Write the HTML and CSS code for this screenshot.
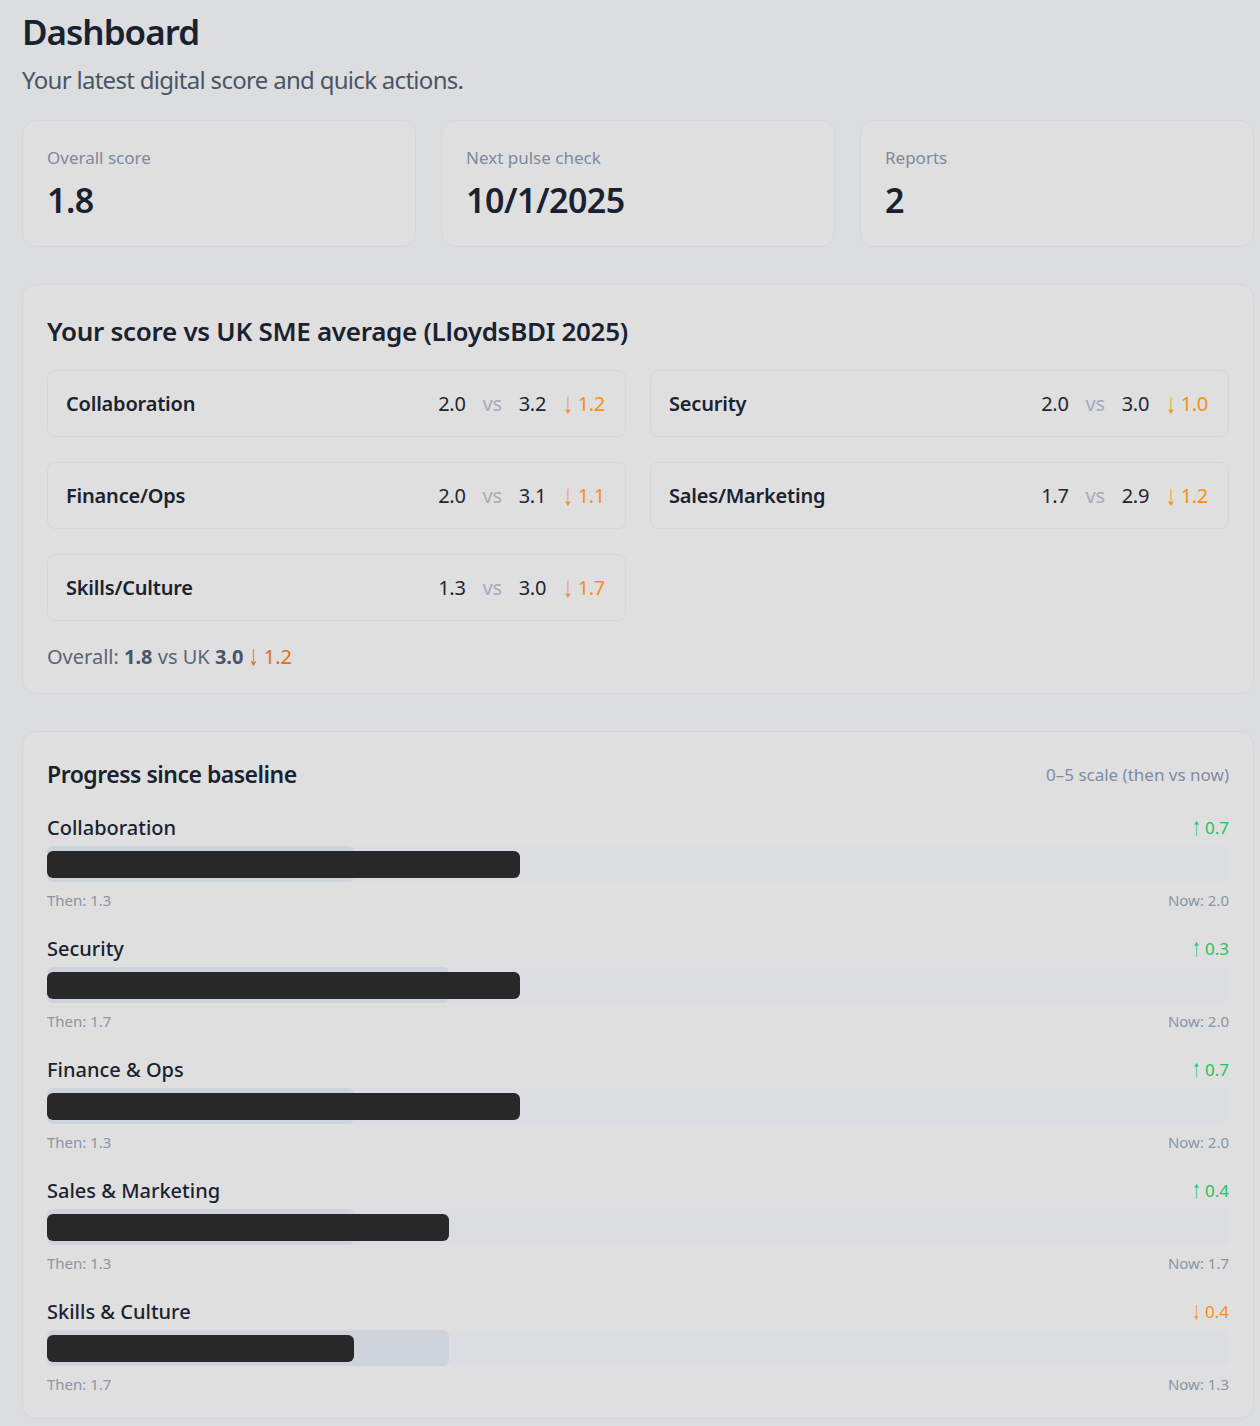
FILE: index.html
```html
<!DOCTYPE html>
<html lang="en">
<head>
<meta charset="utf-8">
<title>Dashboard</title>
<link rel="stylesheet" href="styles.css">
</head>
<body>
<main class="page">
  <header class="page-head">
    <h1 class="page-title">Dashboard</h1>
    <p class="page-sub">Your latest digital score and quick actions.</p>
  </header>

  <section class="stats">
    <div class="card stat">
      <div class="stat-label">Overall score</div>
      <div class="stat-value">1.8</div>
    </div>
    <div class="card stat">
      <div class="stat-label">Next pulse check</div>
      <div class="stat-value">10/1/2025</div>
    </div>
    <div class="card stat">
      <div class="stat-label">Reports</div>
      <div class="stat-value">2</div>
    </div>
  </section>

  <section class="card compare">
    <h2 class="compare-title">Your score vs UK SME average (LloydsBDI 2025)</h2>
    <div class="compare-grid">
      <div class="cmp-row">
        <span class="cmp-name">Collaboration</span>
        <span class="cmp-vals"><span>2.0</span><span class="vs">vs</span><span>3.2</span><span class="down"><span class="arr">↓</span> 1.2</span></span>
      </div>
      <div class="cmp-row">
        <span class="cmp-name">Security</span>
        <span class="cmp-vals"><span>2.0</span><span class="vs">vs</span><span>3.0</span><span class="down"><span class="arr">↓</span> 1.0</span></span>
      </div>
      <div class="cmp-row">
        <span class="cmp-name">Finance/Ops</span>
        <span class="cmp-vals"><span>2.0</span><span class="vs">vs</span><span>3.1</span><span class="down"><span class="arr">↓</span> 1.1</span></span>
      </div>
      <div class="cmp-row">
        <span class="cmp-name">Sales/Marketing</span>
        <span class="cmp-vals"><span>1.7</span><span class="vs">vs</span><span>2.9</span><span class="down"><span class="arr">↓</span> 1.2</span></span>
      </div>
      <div class="cmp-row">
        <span class="cmp-name">Skills/Culture</span>
        <span class="cmp-vals"><span>1.3</span><span class="vs">vs</span><span>3.0</span><span class="down"><span class="arr">↓</span> 1.7</span></span>
      </div>
    </div>
    <p class="overall">Overall: <b>1.8</b> vs UK <b>3.0</b> <span class="overall-delta"><span class="arr">↓</span> 1.2</span></p>
  </section>

  <section class="card progress">
    <div class="prog-head">
      <h2 class="prog-title">Progress since baseline</h2>
      <span class="prog-scale">0–5 scale (then vs now)</span>
    </div>

    <div class="prog-item">
      <div class="prog-top"><span class="prog-name">Collaboration</span><span class="up"><span class="arr">↑</span> 0.7</span></div>
      <div class="track"><div class="then-bar" style="width:26%"></div><div class="now-bar" style="width:40%"></div></div>
      <div class="prog-caps"><span>Then: 1.3</span><span>Now: 2.0</span></div>
    </div>

    <div class="prog-item">
      <div class="prog-top"><span class="prog-name">Security</span><span class="up"><span class="arr">↑</span> 0.3</span></div>
      <div class="track"><div class="then-bar" style="width:34%"></div><div class="now-bar" style="width:40%"></div></div>
      <div class="prog-caps"><span>Then: 1.7</span><span>Now: 2.0</span></div>
    </div>

    <div class="prog-item">
      <div class="prog-top"><span class="prog-name">Finance &amp; Ops</span><span class="up"><span class="arr">↑</span> 0.7</span></div>
      <div class="track"><div class="then-bar" style="width:26%"></div><div class="now-bar" style="width:40%"></div></div>
      <div class="prog-caps"><span>Then: 1.3</span><span>Now: 2.0</span></div>
    </div>

    <div class="prog-item">
      <div class="prog-top"><span class="prog-name">Sales &amp; Marketing</span><span class="up"><span class="arr">↑</span> 0.4</span></div>
      <div class="track"><div class="then-bar" style="width:26%"></div><div class="now-bar" style="width:34%"></div></div>
      <div class="prog-caps"><span>Then: 1.3</span><span>Now: 1.7</span></div>
    </div>

    <div class="prog-item">
      <div class="prog-top"><span class="prog-name">Skills &amp; Culture</span><span class="down"><span class="arr">↓</span> 0.4</span></div>
      <div class="track"><div class="then-bar" style="width:34%"></div><div class="now-bar" style="width:26%"></div></div>
      <div class="prog-caps"><span>Then: 1.7</span><span>Now: 1.3</span></div>
    </div>
  </section>
</main>
</body>
</html>
```

FILE: styles.css
```css
* { box-sizing: border-box; }
html, body { margin: 0; padding: 0; }
body {
  background: #dcdddf;
  font-family: "Noto Sans", "Open Sans", sans-serif;
  color: #1e2633;
}
.page {
  width: 1232px;
  margin-left: 22px;
  padding-top: 8px;
  padding-bottom: 8px;
}
.page-title {
  margin: 0;
  font-size: 35px;
  line-height: 48px;
  font-weight: 600;
  letter-spacing: -1px;
  color: #1a2230;
}
.page-sub {
  margin: 4px 0 0;
  font-size: 24px;
  line-height: 40px;
  letter-spacing: -0.7px;
  color: #4a5566;
}
.card {
  background: #dfdfdf;
  border: 1px solid #d6d7d9;
  border-radius: 14px;
}
.stats {
  display: grid;
  grid-template-columns: repeat(3, 1fr);
  gap: 25px;
  margin-top: 20px;
}
.stat {
  height: 127px;
  padding: 24px;
}
.stat-label {
  font-size: 17px;
  line-height: 26px;
  color: #7d8a9c;
}
.stat-value {
  margin-top: 6px;
  font-size: 34px;
  line-height: 46px;
  font-weight: 600;
  letter-spacing: -0.5px;
  color: #1a2230;
}
.compare {
  margin-top: 37px;
  padding: 24px 24px 22px;
}
.compare-title {
  margin: 0;
  font-size: 26px;
  line-height: 44px;
  font-weight: 600;
  letter-spacing: -0.3px;
  color: #1a2230;
}
.compare-grid {
  margin-top: 17px;
  display: grid;
  grid-template-columns: 1fr 1fr;
  column-gap: 24px;
  row-gap: 25px;
}
.cmp-row {
  height: 67px;
  display: flex;
  align-items: center;
  justify-content: space-between;
  padding: 0 20px 0 18px;
  border: 1px solid #d6d7d9;
  border-radius: 8px;
}
.cmp-name {
  font-size: 20px;
  font-weight: 600;
  letter-spacing: -0.2px;
  color: #1a2230;
}
.cmp-vals {
  display: flex;
  gap: 17px;
  font-size: 20px;
  letter-spacing: -0.3px;
  color: #1e2633;
}
.vs { color: #a3adbd; }
.down { color: #f6901c; }
.up { color: #22c35e; }
.arr {
  display: inline-block;
  transform: scaleY(1.45);
  transform-origin: 50% 65%;
}
.overall {
  margin: 22px 0 0;
  font-size: 20px;
  line-height: 28px;
  color: #5a6575;
}
.overall b { font-weight: 700; color: #4a5566; }
.overall-delta { color: #df6d1a; }
.progress {
  margin-top: 37px;
  padding: 24px;
}
.prog-head {
  display: flex;
  justify-content: space-between;
  align-items: center;
  margin-bottom: 21px;
}
.prog-title {
  margin: 0;
  font-size: 23px;
  line-height: 36px;
  font-weight: 600;
  letter-spacing: -0.5px;
  color: #1a2230;
}
.prog-scale {
  font-size: 17px;
  color: #7f8ca3;
}
.prog-item + .prog-item { margin-top: 24px; }
.prog-top {
  display: flex;
  justify-content: space-between;
  align-items: center;
  height: 28px;
}
.prog-name {
  font-size: 20px;
  font-weight: 500;
  color: #1a2230;
}
.prog-top .up, .prog-top .down { font-size: 17px; }
.track {
  position: relative;
  margin-top: 5px;
  height: 36px;
  border-radius: 6px;
  background: #dcdde0;
}
.then-bar {
  height: 36px;
  border-radius: 6px;
  background: #cfd4dc;
}
.now-bar {
  position: absolute;
  left: 0;
  top: 5px;
  height: 27px;
  border-radius: 6px;
  background: #282828;
}
.prog-caps {
  display: flex;
  justify-content: space-between;
  margin-top: 8px;
  height: 20px;
  font-size: 15px;
  line-height: 20px;
  color: #8a95a6;
}
```
